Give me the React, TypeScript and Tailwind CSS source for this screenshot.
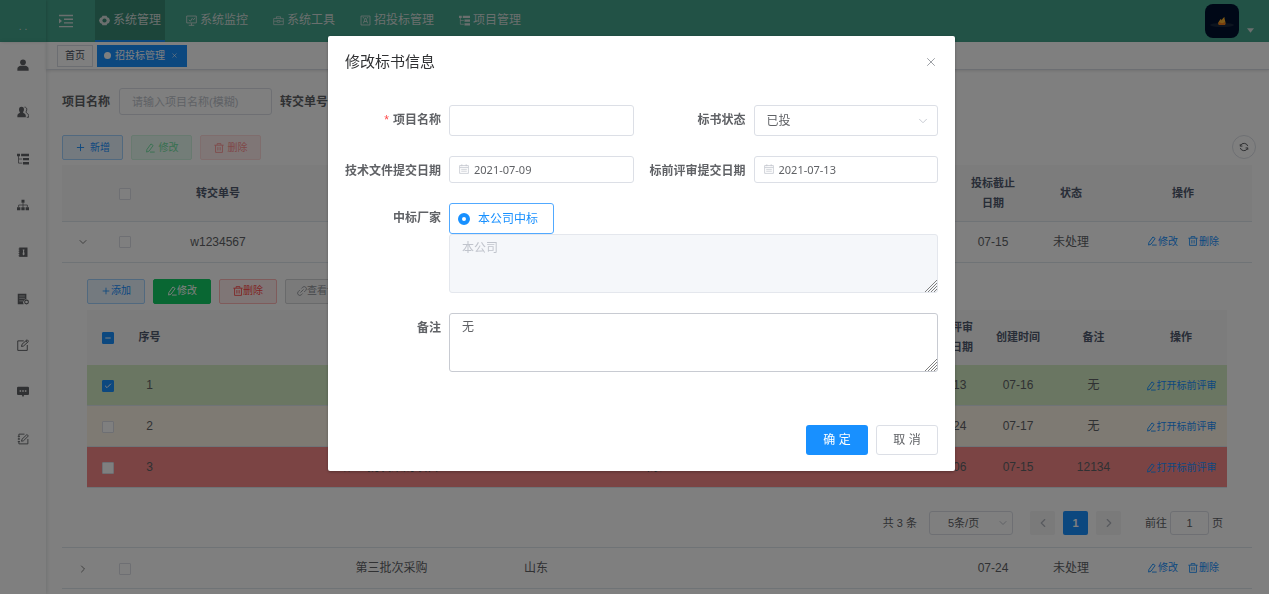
import type { ReactNode } from 'react';
import { Check, ChevronDown, ChevronLeft, ChevronRight, Minus, Plus, X } from 'lucide-react';

const sideIcons: { name: string; icon: ReactNode }[] = [
  {
    name: '用户管理',
    icon: (
      <>
        <circle cx="8" cy="4.4" r="3.8" fill="currentColor" />
        <path d="M0.5 15.500v-2.500C.5 10.600 3 9.300 5 9h6c2 .3 4.500 1.600 4.500 4v2.500z" fill="currentColor" />
      </>
    ),
  },
  {
    name: '角色管理',
    icon: (
      <>
        <path d="M6 1c2.400 0 3.500 1.700 3.300 4-.1 1.600-.8 2.600-1.300 3.300.3 1.300 3.600 1.700 3.700 4.200V15H.5v-2.500C.7 10 3.800 9.600 4 8.300 3.300 7.500 2.700 6.500 2.700 5 2.600 2.700 3.700 1 6 1z" fill="currentColor" />
        <path d="M10 1.500c2.300 0 3.300 1.600 3 3.700-.1 1.400-.7 2.200-1.200 2.800.4 1.500 3.500 2 3.700 4.500V15h-2.500" fill="none" stroke="currentColor" strokeWidth="1.200" />
      </>
    ),
  },
  {
    name: '菜单管理',
    icon: (
      <>
        <path d="M0 1h4v3.200H0zM5.500 1H16v3.200H5.500zM8 6.500h8v3.200H8zM8 12h8v3.200H8z" fill="currentColor" />
        <path d="M2 4v9.500h5M2 8h5" fill="none" stroke="currentColor" strokeWidth="1" />
      </>
    ),
  },
  {
    name: '部门管理',
    icon: (
      <>
        <path d="M6 1h4v4H6zM0 11h4.500v4H0zM5.800 11h4.400v4H5.800zM11.500 11H16v4h-4.500z" fill="currentColor" />
        <path d="M8 5v6M2.200 11V8h11.600v3" fill="none" stroke="currentColor" strokeWidth="1" />
      </>
    ),
  },
  {
    name: '字典管理',
    icon: (
      <>
        <path d="M3 2h11v12.500H3z" fill="currentColor" />
        <path d="M2 4h2M2 7h2M2 10h2M2 13h2" stroke="currentColor" />
        <path d="M7.500 4.500h2.500L9.400 7l.8 4-1.400 1.500L7.400 11 8.200 7z" fill="white" />
      </>
    ),
  },
  {
    name: '日志管理',
    icon: (
      <>
        <path d="M1 1h11.500v7.500A4 4 0 0 0 9 15H1z" fill="currentColor" />
        <path d="M3 4h7.500M3 7h7.500M3 10.500h5" stroke="white" strokeWidth=".8" />
        <circle cx="12.700" cy="12" r="2.500" fill="none" stroke="currentColor" strokeWidth="1.400" />
      </>
    ),
  },
  {
    name: '参数设置',
    icon: (
      <path d="M9 2.500H1v12.700h12.700V8M6 10l.7-3 6.800-6 2 2-6.700 6.300zM12 2.500l2 2" fill="none" stroke="currentColor" strokeWidth="1.300" />
    ),
  },
  {
    name: '通知公告',
    icon: (
      <>
        <path d="M1.500 1h13Q16 1 16 2.500v8q0 1.500-1.500 1.500h-5L8 15l-1.500-3h-5Q0 12 0 10.500v-8Q0 1 1.500 1z" fill="currentColor" />
        <path d="M3.500 5.700h2v2h-2zM7 5.700h2v2H7zM10.500 5.700h2v2h-2z" fill="white" />
      </>
    ),
  },
  {
    name: '表单管理',
    icon: (
      <path d="M10 1.500H2.500v3M2.500 6v3M2.500 10.500v4h12V8M1 4.500h3M1 8h3M1 11.500h3M6 11l.6-2.600 6.600-6.300 2 1.800-6.600 6.500z" fill="none" stroke="currentColor" strokeWidth="1.200" />
    ),
  },
];

const navItems: { label: string; icon: ReactNode }[] = [
  {
    label: '系统管理',
    icon: (
      <>
        <path d="M5 1h6l1 2.200 2.500 1L16 8l-1.500 3.800-2.500 1L11 15H5l-1-2.200-2.500-1L0 8l1.500-3.800 2.500-1z" fill="currentColor" />
        <circle cx="8" cy="8" r="3" fill="#388a75" />
      </>
    ),
  },
  {
    label: '系统监控',
    icon: <path d="M1 1.500h14v10H1zM8 12v3M4 15h8M4 7l2.500 2L9 5l2 2 2-3" fill="none" stroke="currentColor" strokeWidth="1.200" />,
  },
  {
    label: '系统工具',
    icon: <path d="M1 5h14v9H1zM5 5V2.500h6V5M1 9h5M10 9h5M6 8h4v2.500H6z" fill="none" stroke="currentColor" strokeWidth="1" />,
  },
  {
    label: '招投标管理',
    icon: <path d="M1.500 1.500h13v13h-13zM5 12l2.500-7.500h1L11 12M6 9.500h4M4 4h2M10 4h2" fill="none" stroke="currentColor" strokeWidth="1.200" />,
  },
  { label: '项目管理', icon: sideIcons[2].icon },
];

const bids = [
  { code: 'w1234567', name: '', area: '', deadline: '07-15', open: true },
  { code: '', name: '第三批次采购', area: '山东', deadline: '07-24', open: false },
];

const reviews = [
  { id: 1, name: '', area: '', techDate: '', reviewDate: '07-13', created: '07-16', remark: '无', checked: true, bg: 'bg-[#d4edc4]' },
  { id: 2, name: '', area: '', techDate: '', reviewDate: '07-24', created: '07-17', remark: '无', checked: false, bg: 'bg-[#fdf5e6]' },
  { id: 3, name: '第二批次采购项目', area: '山东', techDate: '09-06', reviewDate: '08-06', created: '07-15', remark: '12134', checked: false, bg: 'bg-[#f78989]' },
];

function Glyph({ children, className }: { children: ReactNode; className: string }) {
  return (
    <svg viewBox="0 0 16 16" className={className} aria-hidden="true">
      {children}
    </svg>
  );
}

function EditIcon() {
  return (
    <Glyph className="h-[10px] w-[10px]">
      <path d="M3 10.500L9.500 1.500l3.500 2.500-6.500 9-4 1.500zM8 14.500h7.500" fill="none" stroke="currentColor" strokeWidth="1.500" />
    </Glyph>
  );
}

function TrashIcon() {
  return (
    <Glyph className="h-[10px] w-[10px]">
      <path d="M0.500 3.500h15M5 3V1h6v2M2.500 3.500v11.500h11V3.500M6.200 6.500v5.500M9.800 6.500v5.500" fill="none" stroke="currentColor" strokeWidth="1.400" />
    </Glyph>
  );
}

function LinkIcon() {
  return (
    <Glyph className="h-[10px] w-[10px]">
      <path d="M7 4l2-2a3.300 3.300 0 0 1 5 5l-2.500 2.500M9 12l-2 2a3.300 3.300 0 0 1-5-5l2.500-2.500M5.500 10.500l5-5" fill="none" stroke="currentColor" strokeWidth="1.400" />
    </Glyph>
  );
}

function Checkbox({ label, checked = false, mixed = false }: { label: string; checked?: boolean; mixed?: boolean }) {
  return (
    <span className="relative inline-flex align-middle">
      <input
        type="checkbox"
        aria-label={label}
        defaultChecked={checked || mixed}
        className="h-3 w-3 appearance-none rounded-[1px] border border-[#dcdfe6] bg-white checked:border-[#1890ff] checked:bg-[#1890ff]"
      />
      {checked && <Check className="pointer-events-none absolute inset-0.5 h-2 w-2 text-white" strokeWidth={3} />}
      {mixed && <Minus className="pointer-events-none absolute inset-0.5 h-2 w-2 text-white" strokeWidth={3} />}
    </span>
  );
}

function RowLink({ icon, children }: { icon: ReactNode; children: ReactNode }) {
  return (
    <a href="#" className="inline-flex items-center gap-px align-middle text-[10px] text-[#1890ff]">
      {icon}
      {children}
    </a>
  );
}

function ToolButton({ icon, children, className }: { icon: ReactNode; children: ReactNode; className: string }) {
  return (
    <button type="button" className={`inline-flex h-[25px] items-center justify-center rounded-xs border text-[10px] ${className}`}>
      {icon}
      {children}
    </button>
  );
}

function ReviewTable() {
  return (
    <table className="mt-1.5 w-full table-fixed text-center">
      <colgroup>
        <col className="w-[42px]" />
        <col className="w-[41px]" />
        <col className="w-[442px]" />
        <col className="w-[76px]" />
        <col />
        <col className="w-[65px]" />
        <col className="w-[66px]" />
        <col className="w-[68px]" />
        <col className="w-[83px]" />
        <col className="w-[92px]" />
      </colgroup>
      <thead>
        <tr className="h-[55px] bg-[#f8f8f9] text-[11px] leading-5 text-[#515a6e]">
          <th><Checkbox label="全选" mixed /></th>
          <th>序号</th>
          <th />
          <th />
          <th />
          <th />
          <th className="px-[10px]">标前评审提交日期</th>
          <th>创建时间</th>
          <th>备注</th>
          <th>操作</th>
        </tr>
      </thead>
      <tbody>
        {reviews.map((row) => (
          <tr key={row.id} className={`h-[41px] border-b border-[#dfe6ec] ${row.bg}`}>
            <td><Checkbox label={`选择 ${row.id}`} checked={row.checked} /></td>
            <td>{row.id}</td>
            <td>{row.name}</td>
            <td>{row.area}</td>
            <td />
            <td>{row.techDate}</td>
            <td>{row.reviewDate}</td>
            <td>{row.created}</td>
            <td>{row.remark}</td>
            <td className="whitespace-nowrap">
              <RowLink icon={<EditIcon />}>打开标前评审</RowLink>
            </td>
          </tr>
        ))}
      </tbody>
    </table>
  );
}

function Pagination() {
  return (
    <div className="mt-[23px] flex items-center justify-end pr-1 text-[11px] text-[#606266]">
      <span>共 3 条</span>
      <div className="relative ml-3">
        <select aria-label="每页条数" className="h-6 w-[84px] appearance-none rounded-[3px] border border-[#dcdfe6] pl-[18px]">
          <option>5条/页</option>
        </select>
        <ChevronDown className="pointer-events-none absolute top-1.5 right-1 h-3 w-3 text-[#c0c4cc]" strokeWidth={2} />
      </div>
      <div className="ml-[17px] flex gap-2">
        <button type="button" aria-label="上一页" className="flex h-6 w-[25px] items-center justify-center rounded-xs bg-[#f4f4f5] text-[#b0b4bc]">
          <ChevronLeft className="h-3.5 w-3.5" />
        </button>
        <button type="button" className="h-6 w-[25px] rounded-xs bg-[#1890ff] font-bold text-white">1</button>
        <button type="button" aria-label="下一页" className="flex h-6 w-[25px] items-center justify-center rounded-xs bg-[#f4f4f5] text-[#b0b4bc]">
          <ChevronRight className="h-3.5 w-3.5" />
        </button>
      </div>
      <label className="ml-6 flex items-center gap-[3px]">
        前往
        <input defaultValue="1" className="h-6 w-[39px] rounded-[3px] border border-[#dcdfe6] text-center" />
        页
      </label>
    </div>
  );
}

function BidTable() {
  return (
    <table className="mt-[5px] w-full table-fixed text-center text-xs text-[#606266]">
      <colgroup>
        <col className="w-[41px]" />
        <col className="w-[44px]" />
        <col className="w-[142px]" />
        <col className="w-[205px]" />
        <col className="w-[84px]" />
        <col />
        <col className="w-[70px]" />
        <col className="w-[86px]" />
        <col className="w-[138px]" />
      </colgroup>
      <thead>
        <tr className="h-14 border-b border-[#dfe6ec] bg-[#f8f8f9] text-[11px] leading-5 text-[#515a6e]">
          <th />
          <th><Checkbox label="全选" /></th>
          <th>转交单号</th>
          <th />
          <th />
          <th />
          <th className="px-3">投标截止日期</th>
          <th>状态</th>
          <th>操作</th>
        </tr>
      </thead>
      {bids.map((bid) => (
        <tbody key={bid.deadline}>
          <tr className="h-[41px] border-b border-[#dfe6ec]">
            <td>
              <button type="button" aria-label="展开" className="align-middle text-[#808080]">
                {bid.open ? <ChevronDown className="h-3 w-3" /> : <ChevronRight className="h-3 w-3" />}
              </button>
            </td>
            <td><Checkbox label="选择" /></td>
            <td>{bid.code}</td>
            <td>{bid.name}</td>
            <td>{bid.area}</td>
            <td />
            <td>{bid.deadline}</td>
            <td>未处理</td>
            <td>
              <div className="flex justify-center gap-[10px]">
                <RowLink icon={<EditIcon />}>修改</RowLink>
                <RowLink icon={<TrashIcon />}>删除</RowLink>
              </div>
            </td>
          </tr>
          {bid.open && (
            <tr className="border-b border-[#dfe6ec]">
              <td colSpan={9} className="px-[25px] pt-4 pb-3">
                <div className="flex gap-2">
                  <ToolButton icon={<Plus className="h-[10px] w-[10px]" />} className="w-[58px] border-[#a3d3ff] bg-[#e8f4ff] text-[#1890ff]">添加</ToolButton>
                  <ToolButton icon={<EditIcon />} className="w-[58px] border-[#13ce66] bg-[#13ce66] text-white">修改</ToolButton>
                  <ToolButton icon={<TrashIcon />} className="w-[58px] border-[#ffb6b6] bg-[#ffeded] text-[#ff4949]">删除</ToolButton>
                  <ToolButton icon={<LinkIcon />} className="w-[74px] border-[#d3d4d6] bg-[#f4f4f5] text-[#909399]">查看详情</ToolButton>
                </div>
                <ReviewTable />
                <Pagination />
              </td>
            </tr>
          )}
        </tbody>
      ))}
    </table>
  );
}

function Field({ id, label, required = false, children }: { id: string; label: string; required?: boolean; children: ReactNode }) {
  return (
    <div className="flex gap-2">
      <label htmlFor={id} className="w-24 shrink-0 text-right leading-[30px] font-bold whitespace-nowrap">
        {required && <span className="mr-1 font-normal text-[#ff4949]">*</span>}
        {label}
      </label>
      <div className="relative min-w-0 flex-1">{children}</div>
    </div>
  );
}

function DateInput({ id, value }: { id: string; value: string }) {
  return (
    <>
      <input
        id={id}
        defaultValue={value}
        className="block h-[27px] w-full rounded-[3px] border border-[#dcdfe6] pl-6 font-['Noto_Sans',sans-serif] text-[11px]"
      />
      <Glyph className="pointer-events-none absolute top-2 left-2.5 h-[10px] w-[10px] text-[#c0c4cc]">
        <path d="M1 2.500h14V15H1zM4.500 .5v3M11.500 .5v3M1 5.500h14M3.500 8.500h9M3.500 11.500h9" fill="none" stroke="currentColor" strokeWidth="1.200" />
      </Glyph>
    </>
  );
}

function ResizeGrip() {
  return (
    <svg viewBox="0 0 12 12" className="pointer-events-none absolute right-px bottom-px h-3 w-3 text-[#808080]" aria-hidden="true">
      <path d="M0 12L12 0M3 12l9-9M6 12l6-6M9 12l3-3" fill="none" stroke="currentColor" strokeWidth="1" />
    </svg>
  );
}

function EditDialog() {
  return (
    <div className="fixed inset-0 flex items-start justify-center bg-black/50 pt-9 pl-3.5">
      <div role="dialog" aria-labelledby="dialog-title" className="w-[627px] rounded-xs bg-white px-[17px] pb-4 text-xs text-[#606266] shadow-[0_1px_3px_rgba(0,0,0,0.3)]">
        <div className="flex items-center justify-between pt-[17px]">
          <h2 id="dialog-title" className="text-[15px] leading-[18px] text-[#303133]">修改标书信息</h2>
          <button type="button" aria-label="关闭" className="text-[#909399]">
            <X className="h-3.5 w-3.5" strokeWidth={1.5} />
          </button>
        </div>

        <form className="mt-[34px] grid grid-cols-2 gap-x-4 gap-y-5">
          <Field id="project" label="项目名称" required>
            <input id="project" className="block h-[31px] w-full rounded-[3px] border border-[#dcdfe6] px-3" />
          </Field>
          <Field id="status" label="标书状态">
            <select id="status" className="block h-[31px] w-full appearance-none rounded-[3px] border border-[#dcdfe6] px-3">
              <option>已投</option>
            </select>
            <ChevronDown className="pointer-events-none absolute top-[9px] right-2 h-3.5 w-3.5 text-[#c0c4cc]" strokeWidth={1.5} />
          </Field>
          <div className="h-[27px]">
            <Field id="tech-date" label="技术文件提交日期">
              <DateInput id="tech-date" value="2021-07-09" />
            </Field>
          </div>
          <div className="h-[27px]">
            <Field id="review-date" label="标前评审提交日期">
              <DateInput id="review-date" value="2021-07-13" />
            </Field>
          </div>
          <div className="col-span-2">
            <Field id="winner" label="中标厂家">
              <label className="inline-flex h-[31px] items-center gap-2 rounded-[3px] border border-[#51a9ff] pr-[15px] pl-2 align-top text-[#1890ff]">
                <input id="winner" type="radio" defaultChecked className="h-3 w-3 appearance-none rounded-full border-4 border-[#1890ff] bg-white" />
                本公司中标
              </label>
              <textarea
                aria-label="中标厂家名称"
                disabled
                placeholder="本公司"
                className="block h-[59px] w-full resize-none rounded-[3px] border border-[#e4e7ed] bg-[#f5f7fa] px-3 py-[5px] placeholder:text-[#c0c4cc]"
              />
              <ResizeGrip />
            </Field>
          </div>
          <div className="col-span-2">
            <Field id="remark" label="备注">
              <textarea id="remark" defaultValue="无" className="block h-[59px] w-full resize-none rounded-[3px] border border-[#c8cbd2] px-3 py-[5px]" />
              <ResizeGrip />
            </Field>
          </div>
        </form>

        <div className="mt-[53px] flex justify-end gap-2">
          <button type="button" className="h-[30px] w-[62px] rounded-[3px] bg-[#1890ff] text-white">确 定</button>
          <button type="button" className="h-[30px] w-[62px] rounded-[3px] border border-[#dcdfe6]">取 消</button>
        </div>
      </div>
    </div>
  );
}

export default function App() {
  return (
    <div className="flex min-h-screen flex-col bg-white font-['Liberation_Sans','Noto_Sans_CJK_SC',sans-serif] text-[#606266]">
      {/* Top bar */}
      <header className="flex h-[42px] bg-[#44a48c] text-xs text-[#d5dedc]">
        <div className="flex w-[46px] items-center justify-center pt-3 text-[10px] shadow-[1px_0_3px_rgba(0,0,0,0.15)]">. .</div>
        <button type="button" aria-label="折叠菜单" className="ml-3">
          <Glyph className="h-4 w-4">
            <path d="M1 2.500h14M6 6.300h9M6 9.900h9M1 13.600h14" fill="none" stroke="currentColor" strokeWidth="1.400" />
            <path d="M1 5.500v5L4 8z" fill="currentColor" />
          </Glyph>
        </button>
        <nav className="ml-[21px] flex gap-[17px]">
          {navItems.map((item, i) => (
            <a
              key={item.label}
              href="#"
              className={`flex items-center gap-[3px] border-b-2 px-1 ${i === 0 ? 'border-[#1890ff] bg-[#388a75]' : 'border-transparent'}`}
            >
              <Glyph className="h-[11px] w-[11px]">{item.icon}</Glyph>
              {item.label}
            </a>
          ))}
        </nav>
        <button type="button" aria-label="用户菜单" className="mr-[15px] ml-auto flex items-center gap-2">
          <svg viewBox="0 0 34 34" className="h-[34px] w-[34px]" aria-hidden="true">
            <rect width="34" height="34" rx="8" fill="#00112f" />
            <ellipse cx="17" cy="21" rx="12" ry="2" fill="#18283f" />
            <path d="M14 21c-2-3 1-4 1.500-6 1 0 1 1 1 1.500.5-1 1.500-2.500 3-3.500-.3 3 2 5 .5 8z" fill="#ffb52e" />
            <path d="M14 21c-.6-1-.4-2 0-3 2 1.500 4 1.500 6 0 .4 1 .3 2 0 3z" fill="#f07c1c" />
          </svg>
          <Glyph className="mt-[18px] h-[7px] w-[7px]">
            <path d="M0 3h16l-8 10z" fill="currentColor" />
          </Glyph>
        </button>
      </header>

      <div className="flex flex-1">
        {/* Collapsed side menu */}
        <aside className="w-[46px] shrink-0 shadow-[1px_0_4px_rgba(0,21,41,0.12)]">
          <nav className="flex h-[420px] flex-col">
            {sideIcons.map((item) => (
              <a key={item.name} href="#" aria-label={item.name} className="flex flex-1 items-center justify-center">
                <Glyph className="h-3 w-3">{item.icon}</Glyph>
              </a>
            ))}
          </nav>
        </aside>

        <main className="min-w-0 flex-1">
          {/* Open pages */}
          <div className="flex h-7 items-center gap-1 border-b border-[#d8dce5] pl-[11px] text-[10px] shadow-[0_1px_3px_rgba(0,0,0,0.12)]">
            <a href="#" className="flex h-[22px] items-center border border-[#d8dce5] px-[7px] text-[#495060]">首页</a>
            <a href="#" className="flex h-[22px] items-center gap-1 bg-[#1890ff] px-[7px] text-white">
              <span className="h-[7px] w-[7px] rounded-full bg-white" />
              招投标管理
              <X className="mx-0.5 h-[7px] w-[7px]" />
            </a>
          </div>

          <div className="pt-[18px] pr-[17px] pb-1 pl-4">
            <form className="flex items-center text-xs font-bold">
              <label htmlFor="search-name">项目名称</label>
              <input
                id="search-name"
                placeholder="请输入项目名称(模糊)"
                className="mr-2 ml-[9px] h-[27px] w-[153px] rounded-[3px] border border-[#dcdfe6] px-3 text-[11px] font-normal placeholder:text-[#c0c4cc]"
              />
              <label htmlFor="search-code">转交单号</label>
              <input id="search-code" className="ml-[9px] h-[27px] w-[153px] rounded-[3px] border border-[#dcdfe6] px-3 text-[11px] font-normal" />
            </form>

            <div className="mt-5 flex gap-2">
              <ToolButton icon={<Plus className="h-[11px] w-[11px]" />} className="w-[61px] gap-1 border-[#a3d3ff] bg-[#e8f4ff] text-[#1890ff]">新增</ToolButton>
              <ToolButton icon={<EditIcon />} className="w-[61px] gap-1 border-[#d0f5e0] bg-[#e7faf0] text-[#71e2a3]">修改</ToolButton>
              <ToolButton icon={<TrashIcon />} className="w-[61px] gap-1 border-[#ffdbdb] bg-[#ffeded] text-[#ff9292]">删除</ToolButton>
              <button type="button" aria-label="刷新" className="-mr-1 ml-auto flex h-6 w-6 items-center justify-center rounded-full border border-[#dcdfe6]">
                <Glyph className="h-[10px] w-[10px]">
                  <path d="M2 7V3.500M2 6.500h3.500M2.300 6A6.200 6.200 0 0 1 14 6.500M14 9v3.500M14 9.500h-3.500M13.700 10A6.200 6.200 0 0 1 2 9.500" fill="none" stroke="currentColor" strokeWidth="1.600" />
                </Glyph>
              </button>
            </div>

            <BidTable />
          </div>
        </main>
      </div>

      <EditDialog />
    </div>
  );
}
